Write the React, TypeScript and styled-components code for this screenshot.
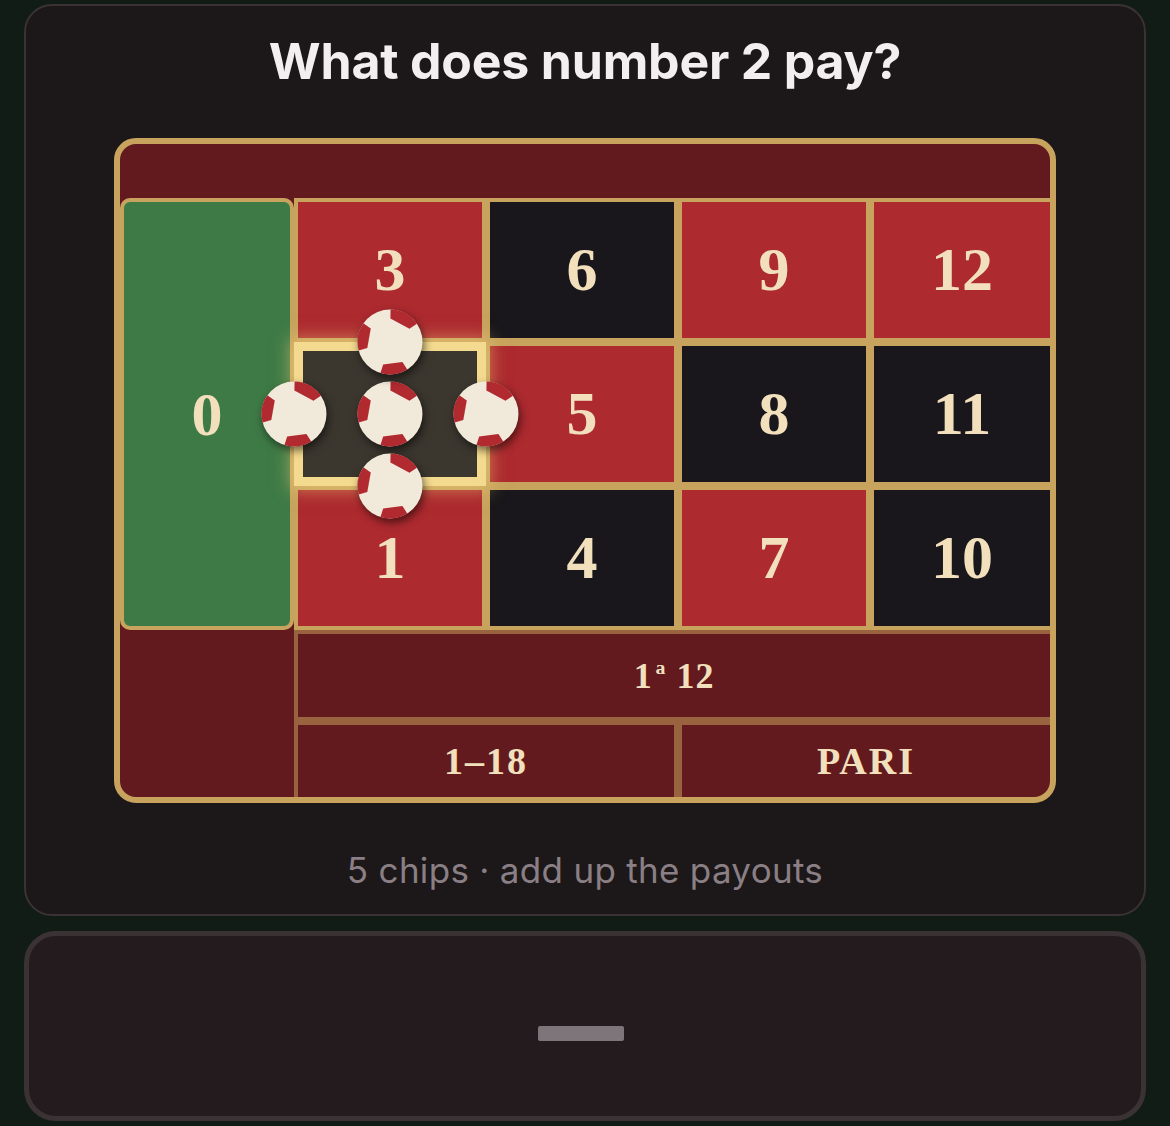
import styled, { createGlobalStyle } from "styled-components";

const GlobalStyle = createGlobalStyle`
  html, body {
    margin: 0;
    background: #121c16;
  }
  body {
    font-family: Inter, "Noto Sans", "Liberation Sans", sans-serif;
  }
`;

const GOLD = "#c8a35d";
const MAROON = "#621a1e";
const BROWN = "#9a633f";
const CREAM = "#f2e0bd";

const Page = styled.div`
  width: 1170px;
  box-sizing: border-box;
  padding: 4px 24px 5px;
  display: flex;
  flex-direction: column;
  gap: 15px;
`;

const Card = styled.div`
  box-sizing: border-box;
  border: 2px solid #3a3234;
  border-radius: 28px;
  background: #1c1719;
  padding: 25px 0 24px;
  display: flex;
  flex-direction: column;
  align-items: center;
`;

const Title = styled.h1`
  margin: 0;
  font-size: 50px;
  line-height: 60px;
  font-weight: 700;
  color: #f3eff0;
  letter-spacing: -0.2px;
`;

const Hint = styled.p`
  margin: 47px 0 0;
  font-size: 35px;
  line-height: 40px;
  letter-spacing: 0.3px;
  color: #8a7f84;
`;

const AnswerPanel = styled.div`
  box-sizing: border-box;
  height: 190px;
  border: 5px solid #3a3234;
  border-radius: 32px;
  background: #231b1e;
  display: flex;
  align-items: center;
  justify-content: center;
  padding: 14px 8px 0 0;
`;

const Placeholder = styled.div`
  width: 86px;
  height: 15px;
  border-radius: 2px;
  background: #7e757a;
`;

/* ---------- roulette table ---------- */

const Board = styled.div`
  margin-top: 47px;
  width: 942px;
  box-sizing: border-box;
  border: 6px solid ${GOLD};
  border-radius: 22px;
  background: ${MAROON};
  overflow: hidden;
  display: grid;
  grid-template-columns: 174px repeat(3, 192px) 180px;
  grid-template-rows: 54px repeat(3, 144px) 91px 76px;
`;

const TopRail = styled.div`
  grid-column: 1 / -1;
  grid-row: 1;
`;

const Corner = styled.div`
  grid-column: 1;
  grid-row: 5 / 7;
`;

const serif = `
  font-family: "Liberation Serif", "Times New Roman", serif;
  font-weight: 700;
  color: ${CREAM};
`;

const Zero = styled.div`
  grid-column: 1;
  grid-row: 2 / 5;
  box-sizing: border-box;
  border: 4px solid ${GOLD};
  border-radius: 10px;
  background: #3e7a46;
  display: flex;
  align-items: center;
  justify-content: center;
  font-size: 62px;
  ${serif}
`;

const NumberCell = styled.div<{ $color: "red" | "black"; $last?: boolean }>`
  box-sizing: border-box;
  border: 4px solid ${GOLD};
  border-right-width: ${(p) => (p.$last ? 0 : 4)}px;
  background: ${(p) => (p.$color === "red" ? "#ad2a2f" : "#19171b")};
  display: flex;
  align-items: center;
  justify-content: center;
  padding-bottom: 2px;
  font-size: 62px;
  ${serif}
`;

const TargetCell = styled.div`
  position: relative;
  z-index: 2;
  box-sizing: border-box;
  border: 9px solid #f3da8f;
  background: #3b372f;
  box-shadow: 0 0 16px 4px rgba(246, 214, 126, 0.5);
`;

const ChipLayer = styled.div`
  position: absolute;
  inset: -9px;
`;

const ChipSpot = styled.div<{ $x: number; $y: number }>`
  position: absolute;
  left: ${(p) => p.$x}%;
  top: ${(p) => p.$y}%;
  width: 66px;
  height: 66px;
  transform: translate(-50%, -50%);
  filter: drop-shadow(2px 4px 4px rgba(0, 0, 0, 0.55));
`;

const OutsideBet = styled.div<{ $span: string; $row: number; $last?: boolean; $closed?: boolean }>`
  grid-column: ${(p) => p.$span};
  grid-row: ${(p) => p.$row};
  box-sizing: border-box;
  border: 4px solid ${BROWN};
  border-right-width: ${(p) => (p.$last ? 0 : 4)}px;
  border-bottom-width: ${(p) => (p.$closed ? 4 : 0)}px;
  display: flex;
  align-items: center;
  justify-content: center;
  font-size: 38px;
  letter-spacing: 2px;
  ${serif}
`;

const DozenLabel = styled.span`
  font-size: 36px;
  letter-spacing: 1px;
`;

const Ordinal = styled.span`
  font-size: 0.55em;
  vertical-align: 0.7em;
  line-height: 0;
  margin: 0 0.5em 0 0.15em;
`;

// chip rim: three red wedges with a flat inner edge
const R = 32.5;
const polar = (r: number, deg: number) => {
  const a = ((deg - 90) * Math.PI) / 180;
  return `${(33 + r * Math.cos(a)).toFixed(2)} ${(33 + r * Math.sin(a)).toFixed(2)}`;
};

const wedge = (from: number, to: number) =>
  `M${polar(R, from)} A${R} ${R} 0 0 1 ${polar(R, to)} L${polar(23.5, to)} L${polar(23.5, from)} Z`;

const rim: [number, number][] = [
  [1, 56],
  [148, 197],
  [255, 305],
];

const Chip = ({ x, y }: { x: number; y: number }) => (
  <ChipSpot $x={x} $y={y}>
    <svg width="66" height="66" viewBox="0 0 66 66">
      <circle cx="33" cy="33" r={R} fill="#f1e9da" />
      {rim.map(([a, b]) => (
        <path key={a} d={wedge(a, b)} fill="#b02a30" />
      ))}
    </svg>
  </ChipSpot>
);

const rows: number[][] = [
  [3, 6, 9, 12],
  [2, 5, 8, 11],
  [1, 4, 7, 10],
];

const reds = new Set([1, 3, 5, 7, 9, 12]);

const bets = [
  { x: 50, y: 50 },
  { x: 50, y: 0 },
  { x: 50, y: 100 },
  { x: 0, y: 50 },
  { x: 100, y: 50 },
];

const App = () => {
  const target = 2;

  return (
    <>
      <GlobalStyle />
      <Page>
        <Card>
          <Title>What does number {target} pay?</Title>
          <Board>
            <TopRail />
            <Zero>0</Zero>
            {rows.flat().map((n, i) =>
              n === target ? (
                <TargetCell key={n}>
                  <ChipLayer>
                    {bets.map((b) => (
                      <Chip key={`${b.x}-${b.y}`} x={b.x} y={b.y} />
                    ))}
                  </ChipLayer>
                </TargetCell>
              ) : (
                <NumberCell key={n} $color={reds.has(n) ? "red" : "black"} $last={i % 4 === 3}>
                  {n}
                </NumberCell>
              )
            )}
            <Corner />
            <OutsideBet $span="2 / -1" $row={5} $last $closed>
              <DozenLabel>
                1<Ordinal>a</Ordinal>12
              </DozenLabel>
            </OutsideBet>
            <OutsideBet $span="2 / 4" $row={6}>
              1–18
            </OutsideBet>
            <OutsideBet $span="4 / -1" $row={6} $last>
              PARI
            </OutsideBet>
          </Board>
          <Hint>{bets.length} chips · add up the payouts</Hint>
        </Card>
        <AnswerPanel>
          <Placeholder />
        </AnswerPanel>
      </Page>
    </>
  );
};

export default App;
